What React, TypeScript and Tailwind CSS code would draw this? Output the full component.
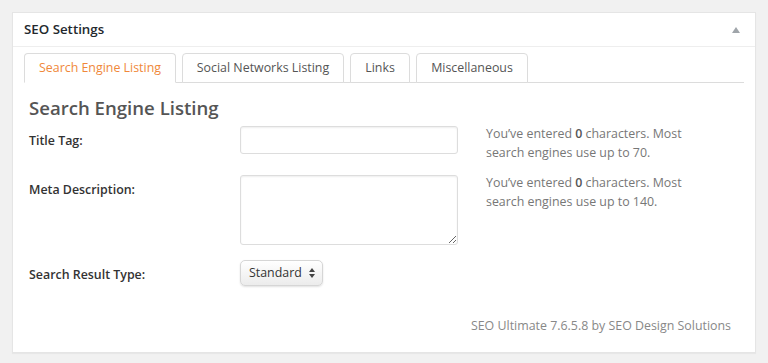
import React from "react";

const font = { fontFamily: '"Open Sans", "Noto Sans", sans-serif' };

function Tab({ label, active, w }: { label: string; active?: boolean; w: string }) {
  return (
    <div
      className={`${w} h-[30px] -mb-px flex items-center justify-center border border-[#dcdcdc] rounded-t-[4px] text-[12.4px] ${
        active ? "bg-white border-b-white text-[#f0883a]" : "bg-white text-[#555]"
      }`}
    >
      {label}
    </div>
  );
}

export default function App() {
  return (
    <div className="w-[768px] h-[363px] bg-[#f1f1f1] pt-[12px] pl-[12px]" style={font}>
      <div className="w-[744px] h-[341px] bg-white border border-[#e5e5e5] shadow-[0_1px_1px_rgba(0,0,0,0.04)] flex flex-col">
        <div className="h-[34px] border-b border-[#eeeeee] flex items-center justify-between pl-[11px] pr-[15px]">
          <span className="text-[13.3px] font-semibold text-[#23282d]">SEO Settings</span>
          <svg width="8" height="6" viewBox="0 0 8 6">
            <path d="M4 0 L8 6 L0 6 Z" fill="#a0a5aa" />
          </svg>
        </div>
        <div className="px-[11px] pt-[6px]">
          <div className="flex gap-[6px] border-b border-[#dcdcdc] pl-0">
            <Tab label="Search Engine Listing" active w="w-[152px]" />
            <Tab label="Social Networks Listing" w="w-[162px]" />
            <Tab label="Links" w="w-[60px]" />
            <Tab label="Miscellaneous" w="w-[112px]" />
          </div>
        </div>
        <div className="pl-[16px] pr-[12px] flex-1 flex flex-col">
          <h2 className="mt-[13px] text-[18.6px] leading-[24px] font-semibold text-[#555]">Search Engine Listing</h2>
          <div className="mt-[6px] flex items-start">
            <div className="w-[211px] pt-[5px] text-[12.4px] leading-[20px] font-semibold text-[#333]">Title Tag:</div>
            <input className="w-[218px] h-[28px] border border-[#dddddd] rounded-[3px] shadow-[inset_0_1px_2px_rgba(0,0,0,0.07)] bg-white" />
            <div className="ml-[28px] -mt-[2px] text-[12.4px] leading-[19px] text-[#777]">
              You’ve entered <b className="font-semibold text-[#555]">0</b> characters. Most
              <br />
              search engines use up to 70.
            </div>
          </div>
          <div className="mt-[13px] flex items-start">
            <div className="w-[211px] pt-[5px] text-[12.4px] leading-[20px] font-semibold text-[#333]">Meta Description:</div>
            <textarea className="w-[218px] h-[70px] border border-[#dddddd] rounded-[3px] shadow-[inset_0_1px_2px_rgba(0,0,0,0.07)] bg-white resize" />
            <div className="ml-[28px] -mt-[2px] text-[12.4px] leading-[19px] text-[#777]">
              You’ve entered <b className="font-semibold text-[#555]">0</b> characters. Most
              <br />
              search engines use up to 140.
            </div>
          </div>
          <div className="mt-[15px] flex items-start">
            <div className="w-[211px] pt-[5px] text-[12.4px] leading-[20px] font-semibold text-[#333]">Search Result Type:</div>
            <div className="w-[83px] h-[26px] border border-[#d6d6d6] rounded-[5px] bg-gradient-to-b from-white to-[#ececec] shadow-[0_1px_2px_rgba(0,0,0,0.12)] flex items-center justify-between pl-[8px] pr-[7px]">
              <span className="text-[12.4px] text-[#333]">Standard</span>
              <svg width="6" height="10" viewBox="0 0 6 10">
                <path d="M3 0 L6 4 L0 4 Z" fill="#444" />
                <path d="M3 10 L6 6 L0 6 Z" fill="#444" />
              </svg>
            </div>
          </div>
          <div className="mt-auto mb-[16px] pr-[12px] text-right text-[12.4px] text-[#888]">
            SEO Ultimate 7.6.5.8 by SEO Design Solutions
          </div>
        </div>
      </div>
    </div>
  );
}
